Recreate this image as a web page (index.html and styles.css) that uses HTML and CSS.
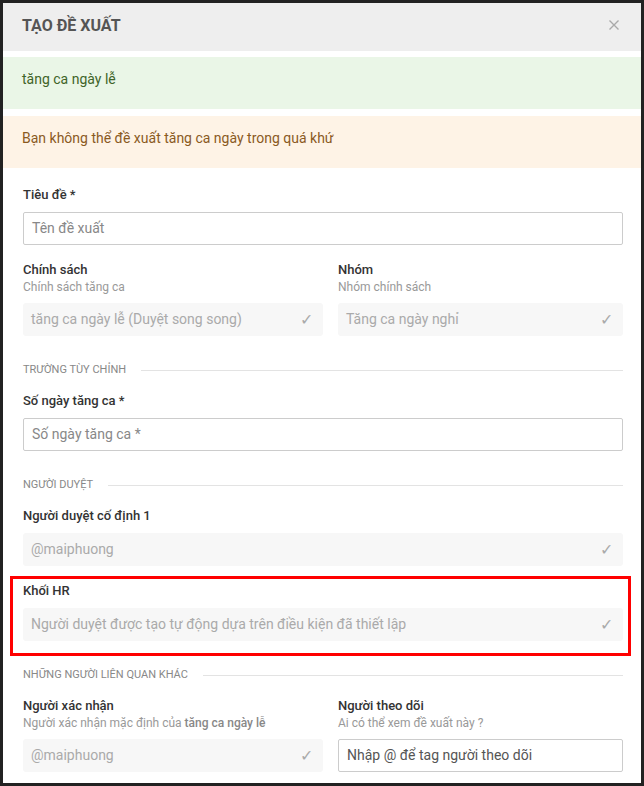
FILE: index.html
```html
<!DOCTYPE html>
<html>
  <head>
    <meta charset='UTF-8'>
    <meta name='viewport' content='width=device-width, initial-scale=1.0'>
    <title>Tạo đề xuất</title>
    <link rel="stylesheet" href="styles.css">
  </head>
  <body>
    <div class='modal'>
      <div class='modal__header'>
        <div class='header__title'>Tạo đề xuất</div>
        <div class='header__close'>
          <svg width='12' height='12' viewBox='0 0 12 12'>
            <path d='M1.5 1.5 L10.5 10.5 M10.5 1.5 L1.5 10.5' stroke='#a9a9a9' stroke-width='1.4' fill='none'/>
          </svg>
        </div>
      </div>

      <div class='alert alert--success'>tăng ca ngày lễ</div>
      <div class='alert alert--warning'>Bạn không thể đề xuất tăng ca ngày trong quá khứ</div>

      <div class='modal__body'>
        <div class='form__group'>
          <div class='form__label'>Tiêu đề *</div>
          <div class='form__input'>Tên đề xuất</div>
        </div>

        <div class='form__row'>
          <div class='form__group'>
            <div class='form__label'>Chính sách</div>
            <div class='form__hint'>Chính sách tăng ca</div>
            <div class='form__select'>tăng ca ngày lễ (Duyệt song song)<span class='select__check'>✓</span></div>
          </div>
          <div class='form__group'>
            <div class='form__label'>Nhóm</div>
            <div class='form__hint'>Nhóm chính sách</div>
            <div class='form__select'>Tăng ca ngày nghỉ<span class='select__check'>✓</span></div>
          </div>
        </div>

        <div class='form__section'>Trường tùy chỉnh</div>

        <div class='form__group'>
          <div class='form__label'>Số ngày tăng ca *</div>
          <div class='form__input'>Số ngày tăng ca *</div>
        </div>

        <div class='form__section'>Người duyệt</div>

        <div class='form__group'>
          <div class='form__label'>Người duyệt cố định 1</div>
          <div class='form__select'>@maiphuong<span class='select__check'>✓</span></div>
        </div>

        <div class='form__group form__group--marked'>
          <div class='form__label'>Khối HR</div>
          <div class='form__select'>Người duyệt được tạo tự động dựa trên điều kiện đã thiết lập<span class='select__check'>✓</span></div>
        </div>

        <div class='form__section form__section--tight'>Những người liên quan khác</div>

        <div class='form__row'>
          <div class='form__group'>
            <div class='form__label'>Người xác nhận</div>
            <div class='form__hint'>Người xác nhận mặc định của <b>tăng ca ngày lễ</b></div>
            <div class='form__select'>@maiphuong<span class='select__check'>✓</span></div>
          </div>
          <div class='form__group'>
            <div class='form__label'>Người theo dõi</div>
            <div class='form__hint'>Ai có thể xem đề xuất này ?</div>
            <div class='form__input form__input--dark'>Nhập @ để tag người theo dõi</div>
          </div>
        </div>
      </div>
    </div>
  </body>
</html>
```

FILE: styles.css
```css
html, body {
  margin: 0;
  font-family: Roboto, 'Liberation Sans', Arial, sans-serif;
}

body {
  background-color: #222;
  padding: 3px;
  box-sizing: border-box;
  height: 100vh;
}

.modal {
  height: 100%;
  background-color: #fff;
  overflow: hidden;
}

.modal__header {
  display: flex;
  align-items: center;
  justify-content: space-between;
  height: 48px;
  padding: 0 21px 0 19px;
  background-color: #eee;
}

.header__title {
  margin-top: -3px;
  font-size: 16px;
  font-weight: bold;
  color: #555;
  text-transform: uppercase;
}

.header__close {
  display: flex;
  margin-top: -4px;
}

.alert {
  height: 52px;
  box-sizing: border-box;
  padding: 12px 19px 0;
  font-size: 14px;
  line-height: 20px;
}

.alert--success {
  margin-top: 6px;
  background-color: #eaf6e7;
  color: #3f6429;
}

.alert--warning {
  margin-top: 7px;
  background-color: #fef3e6;
  color: #8a5a1f;
}

.modal__body {
  padding: 18px 18px 0 20px;
}

.form__group {
  margin-bottom: 16px;
}

.form__row {
  display: grid;
  grid-template-columns: 300px 1fr;
  column-gap: 15px;
}

.form__row .form__group {
  margin-bottom: 0;
}

.form__label {
  font-size: 13px;
  font-weight: 500;
  line-height: 18px;
  color: #333;
  margin-bottom: 8px;
}

.form__hint {
  font-size: 12px;
  line-height: 16px;
  color: #999;
  margin-top: -8px;
  margin-bottom: 8px;
}

.form__hint b {
  font-weight: 500;
  color: #888;
}

.form__input {
  height: 33px;
  box-sizing: border-box;
  padding: 0 8px;
  border: 1px solid #ccc;
  border-radius: 2px;
  font-size: 14px;
  line-height: 31px;
  color: #888;
}

.form__input--dark {
  color: #555;
}

.form__select {
  display: flex;
  justify-content: space-between;
  height: 33px;
  padding: 0 10px 0 8px;
  border-radius: 3px;
  background-color: #f7f7f7;
  font-size: 14px;
  line-height: 33px;
  color: #aaa;
}

.select__check {
  font-size: 16px;
  color: #aaa;
}

.form__section {
  display: flex;
  align-items: center;
  gap: 15px;
  margin: 26px 0 14px;
  font-size: 11px;
  line-height: 16px;
  color: #888;
  text-transform: uppercase;
}

.form__section::after {
  content: '';
  flex: 1;
  height: 1px;
  background-color: #e3e3e3;
}

.form__section--tight {
  margin-top: 11px;
}

.form__group--marked {
  margin: -6px -8px 0 -13px;
  padding: 3px 5px 12px 10px;
  border: 3px solid #f00;
}
```
